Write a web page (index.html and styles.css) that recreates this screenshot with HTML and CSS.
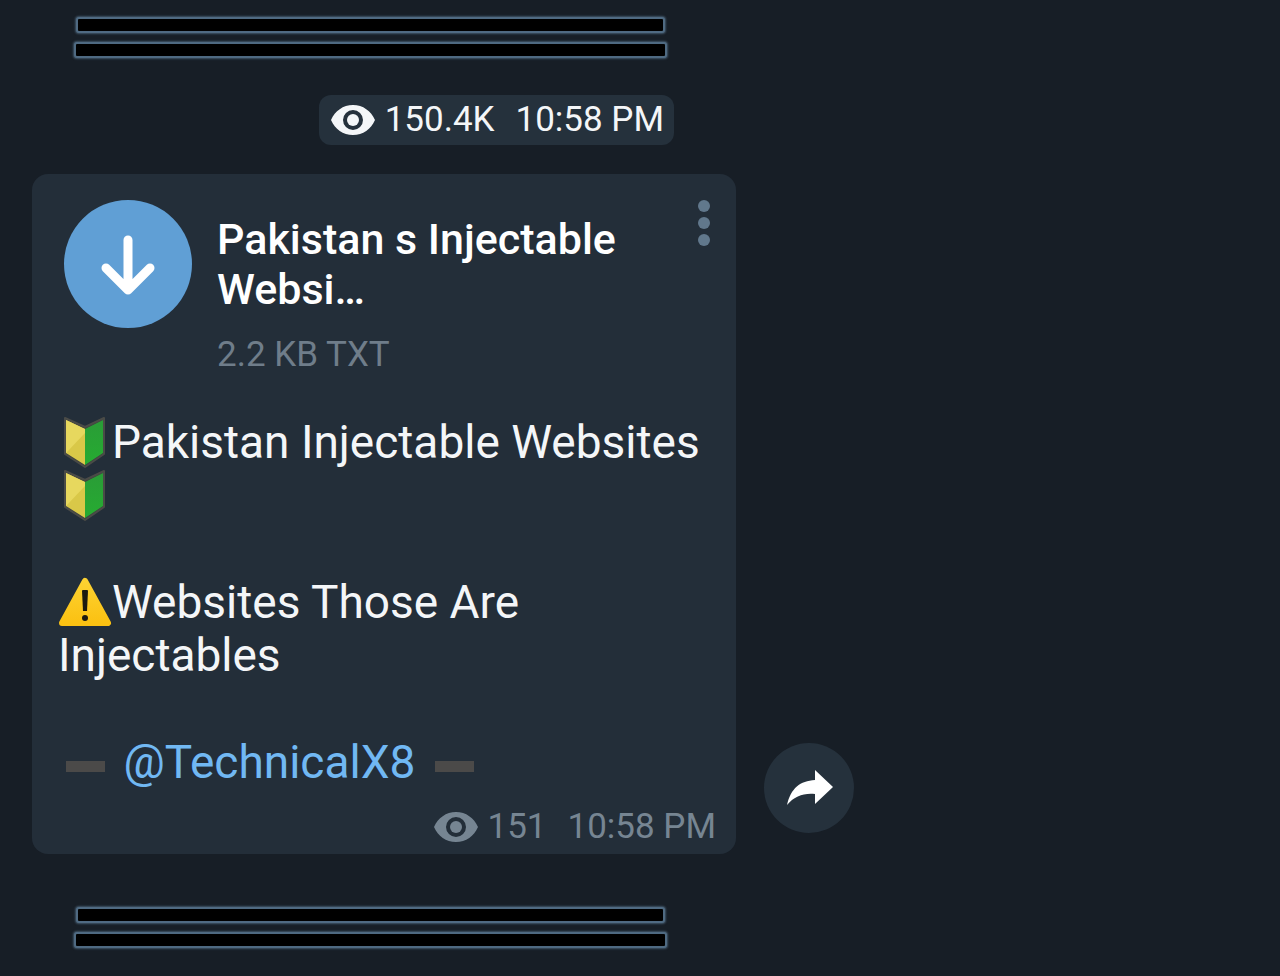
FILE: index.html
```
<!DOCTYPE html>
<html lang="en">
<head>
    <meta charset="UTF-8">
    <meta name="viewport" content="width=device-width, initial-scale=1.0">
    <title>TechnicalX8</title>
    <link rel="stylesheet" href="styles.css">
</head>
<body>

<main class="feed">
    <div class="post">
        <div class="bars">
            <div class="bar bar-short"></div>
            <div class="bar"></div>
        </div>
        <div class="meta meta-pill">
            <svg class="eye" viewBox="0 0 44 30" aria-hidden="true">
                <path fill="currentColor" fill-rule="evenodd" d="M22 0C12 0 4 6 0 15c4 9 12 15 22 15s18-6 22-15C40 6 32 0 22 0zM22 5a10 10 0 1 1 0 20a10 10 0 1 1 0-20z"/>
                <circle fill="currentColor" cx="22" cy="15" r="6"/>
            </svg>
            <span class="views">150.4K</span>
            <time>10:58 PM</time>
        </div>
    </div>

    <div class="row">
        <article class="message">
            <header class="file">
                <button class="download" aria-label="Download">
                    <svg viewBox="0 0 128 128" aria-hidden="true">
                        <path d="M64 40v50M42 68l22 22 22-22" fill="none" stroke="#fff" stroke-width="9" stroke-linecap="round" stroke-linejoin="round"/>
                    </svg>
                </button>
                <div class="file-info">
                    <h3>Pakistan s Injectable Websi…</h3>
                    <div class="file-size">2.2 KB TXT</div>
                </div>
                <button class="menu" aria-label="More">
                    <svg viewBox="0 0 12 46" aria-hidden="true">
                        <circle cx="6" cy="6" r="6"/>
                        <circle cx="6" cy="23" r="6"/>
                        <circle cx="6" cy="40" r="6"/>
                    </svg>
                </button>
            </header>

            <div class="text">
                <p>
                    <svg class="emoji" viewBox="0 0 54 54" aria-hidden="true"><use href="#beginner"/></svg>Pakistan Injectable Websites
                    <svg class="emoji" viewBox="0 0 54 54" aria-hidden="true"><use href="#beginner"/></svg>
                </p>
                <p>
                    <svg class="emoji" viewBox="0 0 54 54" aria-hidden="true">
                        <path d="M27 5L50 47H4z" fill="url(#amber)" stroke="url(#amber)" stroke-width="6" stroke-linejoin="round"/>
                        <path d="M25 14h4q1 0 1 1l-1 20h-4l-1-20q0-1 1-1z" fill="#1c1a10"/>
                        <circle cx="27" cy="42" r="3" fill="#1c1a10"/>
                    </svg>Websites Those Are Injectables
                </p>
                <p>
                    <svg class="emoji" viewBox="0 0 54 54" aria-hidden="true"><use href="#minus"/></svg>
                    <a href="#">@TechnicalX8</a>
                    <svg class="emoji" viewBox="0 0 54 54" aria-hidden="true"><use href="#minus"/></svg>
                </p>
            </div>

            <div class="meta">
                <svg class="eye" viewBox="0 0 44 30" aria-hidden="true">
                    <path fill="currentColor" fill-rule="evenodd" d="M22 0C12 0 4 6 0 15c4 9 12 15 22 15s18-6 22-15C40 6 32 0 22 0zM22 5a10 10 0 1 1 0 20a10 10 0 1 1 0-20z"/>
                    <circle fill="currentColor" cx="22" cy="15" r="6"/>
                </svg>
                <span class="views">151</span>
                <time>10:58 PM</time>
            </div>
        </article>

        <button class="share" aria-label="Share">
            <svg viewBox="0 0 90 90" aria-hidden="true">
                <path d="M23 62C27 45 36 38 51 37V27L69 44 51 61V51C39 50 31 53 23 62z" fill="#fff"/>
            </svg>
        </button>
    </div>

    <div class="bars">
        <div class="bar bar-short"></div>
        <div class="bar"></div>
    </div>
</main>

<svg class="defs" aria-hidden="true">
    <defs>
        <linearGradient id="amber" x1="0" y1="0" x2="0" y2="1">
            <stop offset="0" stop-color="#fdd231"/>
            <stop offset="1" stop-color="#fbc112"/>
        </linearGradient>
        <linearGradient id="green" x1="0" y1="0" x2="0" y2="1">
            <stop offset="0" stop-color="#2a9c37"/>
            <stop offset="1" stop-color="#26ac31"/>
        </linearGradient>
        <symbol id="beginner" viewBox="0 0 54 54">
            <path d="M7 2L27 11 46 2V38L27 51 7 38z" fill="#3b3f3c" stroke="#4a4b47" stroke-width="2" stroke-linejoin="round"/>
            <path d="M8 4L27 13V49L8 37z" fill="#d9c848"/>
            <path d="M8 4L27 13V17L8 37z" fill="#e7d85e"/>
            <path d="M27 13L45 4V37L27 49z" fill="url(#green)"/>
        </symbol>
        <symbol id="minus" viewBox="0 0 54 54">
            <rect x="8" y="25" width="39" height="11" fill="#4b4a49"/>
        </symbol>
    </defs>
</svg>

</body>
</html>
```
FILE: styles.css
```
* {
    box-sizing: border-box;
}

body {
    margin: 0;
    background-color: #171e26;
    color: #f4f6f8;
    font-family: Roboto, sans-serif;
}

button {
    padding: 0;
    border: none;
    cursor: pointer;
}

svg {
    display: block;
}

.feed {
    padding: 17px 32px 24px;
}

.post {
    display: flex;
    flex-direction: column;
    width: 704px;
    max-width: 100%;
    margin-bottom: 29px;
}

.bars {
    display: flex;
    flex-direction: column;
    gap: 9px;
    width: 593px;
    max-width: 100%;
    margin-left: 42px;
}

.bar {
    height: 16px;
    border: 2px solid #4f6a82;
    border-radius: 3px;
    background-color: #000;
    box-shadow: 0 0 2px 1px #3f5466;
}

.bar-short {
    margin: 0 2px;
}

.meta {
    display: flex;
    align-items: center;
    justify-content: flex-end;
    color: #768592;
    font-size: 35px;
    line-height: 50px;
}

.meta-pill {
    align-self: flex-end;
    margin: 37px 62px 0 0;
    padding: 0 10px 0 12px;
    border-radius: 12px;
    background-color: #25313c;
    color: #f4f6f8;
}

.eye {
    width: 44px;
    height: 30px;
    margin-right: 10px;
}

.views {
    margin-right: 21px;
}

.row {
    display: flex;
    align-items: flex-end;
    gap: 28px;
    margin-bottom: 53px;
}

.message {
    width: 704px;
    padding: 26px 20px 2px 26px;
    border-radius: 16px;
    background-color: #232e39;
}

.file {
    display: flex;
    align-items: flex-start;
    padding-left: 6px;
    margin-bottom: 36px;
}

.download {
    flex: none;
    width: 128px;
    height: 128px;
    border-radius: 50%;
    background-color: #609fd5;
}

.file-info {
    flex: 1;
    padding: 14px 25px 0;
}

.file-info h3 {
    margin: 0;
    color: #fff;
    font-size: 43px;
    font-weight: 500;
    line-height: 50px;
}

.file-size {
    margin-top: 16px;
    color: #6f7d8a;
    font-size: 35px;
    line-height: 50px;
}

.menu {
    flex: none;
    margin-right: 6px;
    background: none;
}

.menu svg {
    width: 12px;
    height: 46px;
    fill: #61788c;
}

.text {
    font-size: 46px;
    line-height: 53px;
}

.text p {
    margin: 0 0 54px;
}

.text p:last-child {
    margin-bottom: 13px;
}

.text a {
    color: #71b8f3;
    text-decoration: none;
}

.emoji {
    display: inline-block;
    width: 54px;
    height: 54px;
    margin: -8px 0;
    vertical-align: -4px;
}

.share {
    flex: none;
    width: 90px;
    height: 90px;
    margin-bottom: 21px;
    border-radius: 50%;
    background-color: #25313c;
}

.defs {
    position: absolute;
    width: 0;
    height: 0;
}
```
